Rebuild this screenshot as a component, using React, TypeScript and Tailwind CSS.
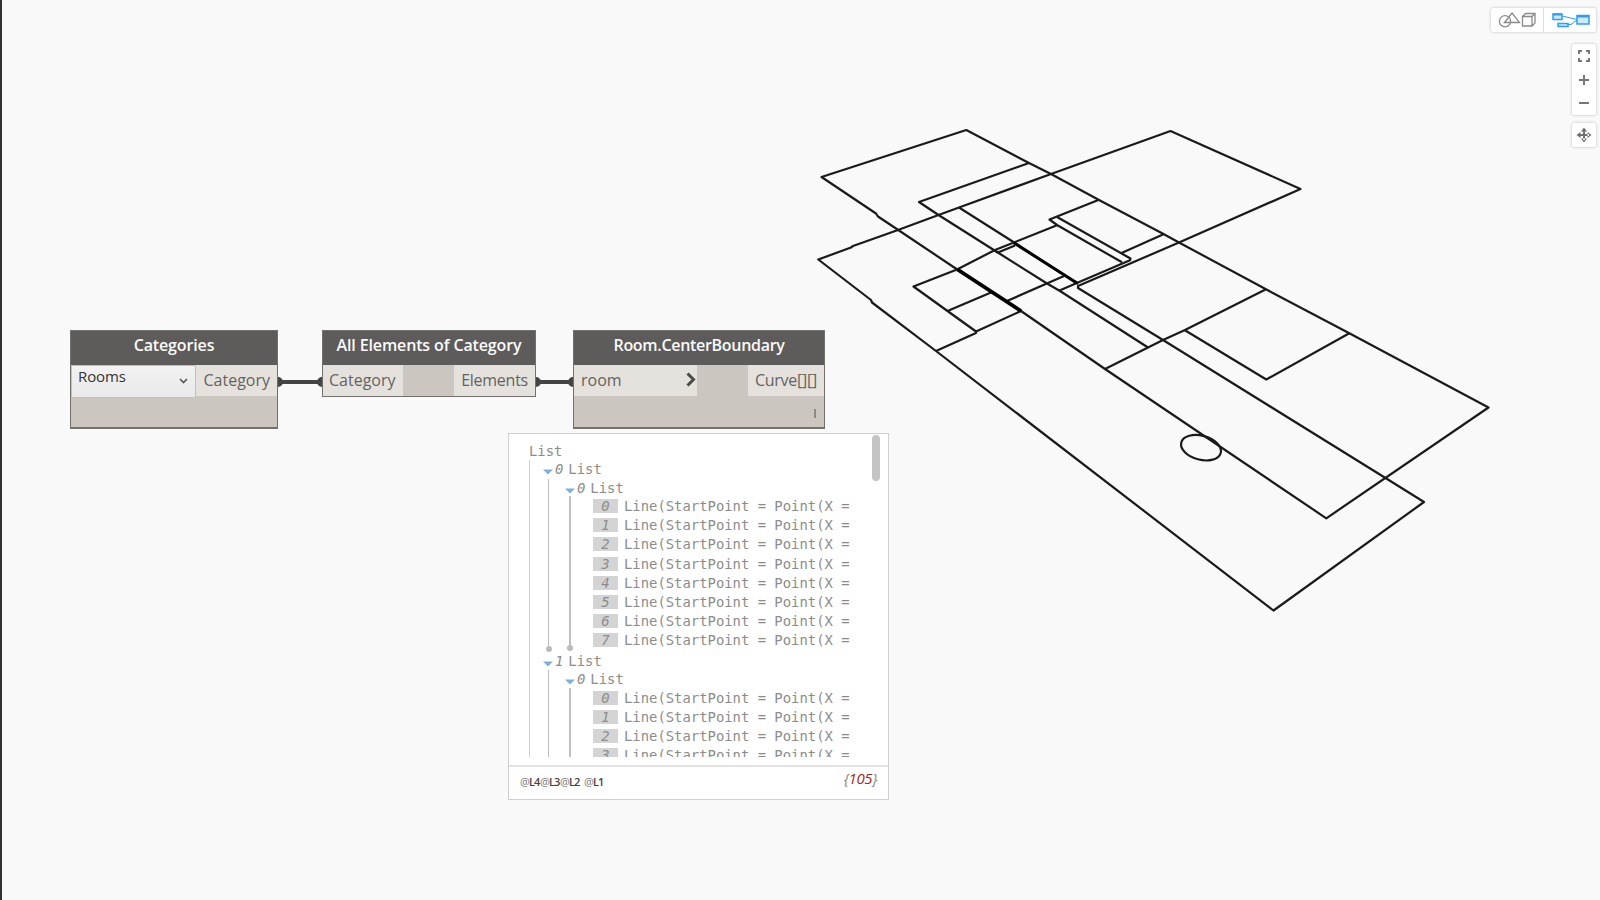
import React from "react";

const UI = "font-['Open_Sans','Noto_Sans',sans-serif]";

const sketch = [
  "M821.5 177L966.3 130L1029 163L1051 174L1099 200L1163.5 234L1179 242.5L1266 289.3L1349.3 333.3L1488.5 407.5L1326.3 518.3L1105 369L1021 311L958 270L897.5 229.5L878 216.5L876 213.5Z",
  "M818.3 259.5L851 247.5L853 246L898 230L938.5 215L959 207.5L1051 174L1170.5 131L1300.5 189L1179 242.5L1078 286L1078 288L1163 340L1385.5 478L1424 502L1273.5 610.5L936 351L872 302.5L871 300Z",
  "M1029 163L919 202L938.5 215L997 252L1047 283.5L1060 291L1148 347.5",
  "M959 207.5L1015 243L1078 284",
  "M1099 199.7L1049.5 219.5L1057 225L1122 262.3",
  "M1057 217L1130.5 258.5L1130 260.3L1078 282.5L1059 290.7",
  "M1057 225.3L995 250L957 269.5L913.5 286.5L947.5 311L976 331.5L976 333L936 351",
  "M995 250.5L998 252.5L1015 245.5",
  "M1163.5 234.3L1121.5 253",
  "M976 331.5L1021 311",
  "M947.5 311L991 292.5",
  "M1007 301L1064 276",
  "M1105 369L1148 347.5L1163 340L1185 330L1266 289.3",
  "M1184.5 330L1266.3 379.5L1349.3 333.3",
];

function Sketch() {
  return (
    <svg className="absolute inset-0" width="1600" height="900" fill="none" stroke="#1a1a1a" strokeWidth="2.2" strokeLinejoin="round">
      {sketch.map((d) => (
        <path key={d} d={d} />
      ))}
      <path d="M957.5 269.5L1021 311" stroke="#000" strokeWidth="3.8" />
      <path d="M1014 243L1077 283" stroke="#000" strokeWidth="3" />
      <ellipse cx="1201" cy="447.7" rx="20.4" ry="12" transform="rotate(15 1201 447.7)" />
      <g stroke="#444" strokeWidth="4">
        <path d="M280 382H321M537 382H573" />
        <g fill="#444" stroke="none">
          <path d="M278 377A5 5 0 0 1 278 387ZM322 377A5 5 0 0 0 322 387ZM536 377A5 5 0 0 1 536 387ZM573 377A5 5 0 0 0 573 387Z" />
        </g>
      </g>
    </svg>
  );
}

function Title({ children }: { children: string }) {
  return (
    <div className="flex h-[34px] shrink-0 items-center justify-center bg-[#5d5c5a] pb-[6px] text-[16px] font-semibold tracking-[-0.13px] text-[#fafafa]">
      {children}
    </div>
  );
}

const nodeBox = "absolute flex flex-col border border-[#74716c] bg-[#cbc6bf]";
const port = "flex h-[31px] items-center bg-[#e5e2de] pb-[1px] text-[16px] text-[#64625f]";

function Nodes() {
  return (
    <div className={UI}>
      <section className={`${nodeBox} left-[70px] top-[330px] h-[99px] w-[208px] border-b-2`}>
        <Title>Categories</Title>
        <div className="flex">
          <div className="flex h-[33px] w-[125px] items-center justify-between border border-[#c3c0bb] bg-linear-to-b from-[#f2f2f2] to-[#e9e9e9] pl-[6px] pr-[7px] text-[15px] tracking-[-0.1px] text-[#333]">
            <span className="-mt-[10px]">Rooms</span>
            <svg className="-mt-[2px]" width="9" height="6" viewBox="0 0 9 6" fill="none" stroke="#555" strokeWidth="1.6"><path d="M1 1L4.5 4.5L8 1" /></svg>
          </div>
          <div className={`${port} flex-1 justify-end pr-[7px]`}>Category</div>
        </div>
      </section>
      <section className={`${nodeBox} left-[322px] top-[330px] h-[67px] w-[214px]`}>
        <Title>All Elements of Category</Title>
        <div className="flex justify-between">
          <div className={`${port} w-[80px] pl-[6px]`}>Category</div>
          <div className={`${port} w-[81px] justify-end pr-[7px] tracking-[-0.25px]`}>Elements</div>
        </div>
      </section>
      <section className={`${nodeBox} left-[573px] top-[330px] h-[99px] w-[252px] border-b-2`}>
        <div className="tracking-[-0.3px]">
          <div className="flex h-[34px] items-center justify-center bg-[#5d5c5a] pb-[6px] text-[16px] font-semibold text-[#fafafa]">Room.CenterBoundary</div>
        </div>
        <div className="flex justify-between">
          <div className={`${port} w-[123px] justify-between pl-[7px] pr-[1px]`}>
            <span>room</span>
            <svg className="-mt-[2px]" width="10" height="15" viewBox="0 0 10 15" fill="none" stroke="#4b4a48" strokeWidth="3"><path d="M1.5 1.5L7.5 7.5L1.5 13.5" /></svg>
          </div>
          <div className={`${port} w-[76px] justify-end pr-[7px] tracking-[-0.25px]`}>Curve[][]</div>
        </div>
        <div className="mr-[8px] mt-[13px] h-[9px] w-[2px] self-end bg-[#8d8a86]" />
      </section>
    </div>
  );
}

function Row({ n }: { n: number }) {
  return (
    <div className="flex h-[19.2px] shrink-0 items-center">
      <span className="flex h-[14px] w-[25px] items-center justify-center bg-[#d4d4d4] italic">{n}</span>
      <span className="ml-[6px] whitespace-pre">Line(StartPoint = Point(X =</span>
    </div>
  );
}

function Head({ n }: { n: number }) {
  return (
    <div className="flex h-[18.5px] shrink-0 items-center">
      <svg className="-ml-px mt-[6px]" width="10" height="6" viewBox="0 0 10 6"><path d="M0 0.5H10L5 5.5Z" fill="#7fb0da" /></svg>
      <span className="ml-[2px] italic">{n}</span>
      <span className="ml-[5px]">List</span>
    </div>
  );
}

function Group({ n, rows, closed }: { n: number; rows: number[]; closed?: boolean }) {
  return (
    <div className="shrink-0">
      <div className="pl-[14px]"><Head n={n} /></div>
      <div className={`relative ml-[18px] border-l border-[#bcbcbc] ${closed ? "h-[173px]" : "h-[200px]"}`}>
        {closed && <i className="absolute -left-[3.5px] bottom-0 size-[6px] rounded-full bg-[#bbb]" />}
        <div className="pl-[17px]"><Head n={0} /></div>
        <div className={`relative ml-[20px] border-l-2 border-[#c0c0c0] pl-[22px] ${closed ? "h-[154.5px]" : "h-[180px]"}`}>
          {closed && <i className="absolute -left-[4px] bottom-0 size-[6px] rounded-full bg-[#bbb]" />}
          <div className="-mt-[0.6px]">
            {rows.map((r) => <Row key={r} n={r} />)}
          </div>
        </div>
      </div>
    </div>
  );
}

const at = <span className="font-normal text-[#777]">@</span>;

function Preview() {
  return (
    <section className="absolute left-[508px] top-[433px] flex h-[367px] w-[381px] flex-col border border-[#cfcfcf] bg-white">
      <div className="flex h-[333px] shrink-0 justify-between border-b-2 border-[#e2e2e2]">
        <div className="ml-[20px] mt-[8px] flex h-[315px] flex-col overflow-hidden font-['DejaVu_Sans_Mono',monospace] text-[13.88px] leading-[18px] text-[#8c8c8c]">
          <div className="h-[18px] shrink-0">List</div>
          <div className="border-l border-[#cfcfcf]">
            <Group n={0} rows={[0, 1, 2, 3, 4, 5, 6, 7]} closed />
            <Group n={1} rows={[0, 1, 2, 3]} />
          </div>
        </div>
        <div className="mr-[8px] mt-px h-[46px] w-[8px] rounded-full bg-[#c4c4c4]" />
      </div>
      <div className={`${UI} flex flex-1 items-center justify-between pl-[11px] pr-[11px]`}>
        <div className="mt-[-2px] flex text-[11px] font-semibold tracking-[-0.9px] text-[#444]">
          <span className="w-[20px]">{at}L4</span>
          <span className="w-[20px]">{at}L3</span>
          <span className="w-[24px]">{at}L2</span>
          <span>{at}L1</span>
        </div>
        <div className="mb-[9px] text-[15px] italic tracking-[-0.4px] text-[#888]">{"{"}<span className="text-[#a3262a]">105</span>{"}"}</div>
      </div>
    </section>
  );
}

const card = "rounded-[2px] bg-white shadow-[0_0_3px_rgba(0,0,0,0.25)]";

function Toolbar() {
  return (
    <div className="absolute right-[4px] top-[8px] flex flex-col items-end">
      <div className={`${card} flex h-[24px] w-[105px]`}>
        <div className="flex w-[53px] items-center justify-center border-r border-[#ddd]">
          <svg width="38" height="16" viewBox="0 0 38 16" fill="none" stroke="#8a8a8a" strokeWidth="1.3">
            <circle cx="7" cy="9.3" r="5.6" />
            <path d="M6.5 10.5L14 1L21.5 10.5ZM24.5 4.5H34V14H24.5ZM24.5 4.5L27.5 1.5H37V11L34 14M34 4.5L37 1.5" />
          </svg>
        </div>
        <div className="flex flex-1 items-center justify-center pl-px">
          <svg width="38" height="16" viewBox="0 0 38 16" fill="#cfe8fc" stroke="#2b9ef5" strokeWidth="1.5">
            <path d="M10 4L25 7.5M16 12.5H19L25 8" fill="none" strokeWidth="1" />
            <path d="M1 2H10V7.5H1ZM6 11.5H16V14.5H6ZM25 3.5H37V12H25Z" />
            <path d="M1 2.5H10M25 4.5H37" strokeWidth="2.2" />
          </svg>
        </div>
      </div>
      <div className={`${card} mt-[12px] flex h-[71px] w-[24px] flex-col items-center`}>
        <svg width="24" height="71" viewBox="0 0 24 71" fill="none" stroke="#777" strokeWidth="2">
          <path d="M7 10V7H10M14 7H17V10M17 14V17H14M10 17H7V14M7 36H17M12 31V41M7 59H17" />
        </svg>
      </div>
      <div className={`${card} mt-[8px] h-[24px] w-[24px]`}>
        <svg width="24" height="24" viewBox="0 0 24 24" fill="#707070">
          <path d="M11 7H13V11H17V13H13V17H11V13H7V11H11ZM12 4.5L15 8.5H9ZM12 19.5L15 15.5H9ZM4.5 12L8.5 9V15ZM19.5 12L15.5 9V15Z" />
        </svg>
      </div>
    </div>
  );
}

export default function App() {
  return (
    <main className="relative h-[900px] w-[1600px] overflow-hidden border-l-2 border-[#333] bg-[#f9f9f9]">
      <div className="absolute -left-[2px] top-0 h-[900px] w-[1600px]">
        <Sketch />
        <Nodes />
        <Preview />
        <Toolbar />
      </div>
    </main>
  );
}
